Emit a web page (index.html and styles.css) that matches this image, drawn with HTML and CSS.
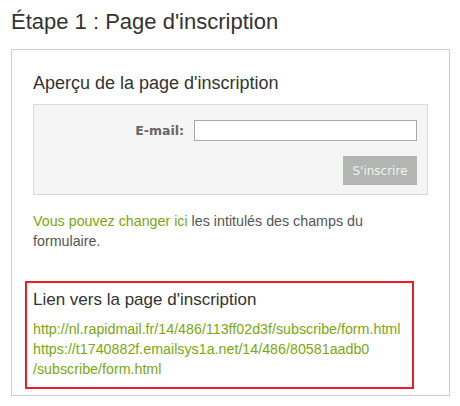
FILE: index.html
```html
<!DOCTYPE html>
<html lang="fr">
<head>
  <meta charset="UTF-8" />
  <title>Étape 1 : Page d'inscription</title>
  <link rel="stylesheet" href="styles.css">
</head>
<body>

  <h1 class="step-title">Étape 1 : Page d'inscription</h1>

  <div class="step-box">
    <h2 class="box-title">Aperçu de la page d'inscription</h2>

    <div class="preview">
      <div class="preview-row">
        <label for="email" class="preview-label">E-mail:</label>
        <input type="text" id="email" class="preview-input">
      </div>
      <div class="preview-actions">
        <button type="button" class="preview-btn">S'inscrire</button>
      </div>
    </div>

    <p class="hint"><a href="#">Vous pouvez changer ici</a> les intitulés des champs du formulaire.</p>

    <div class="link-block">
      <h3 class="link-title">Lien vers la page d'inscription</h3>
      <a href="#" class="form-link">http://nl.rapidmail.fr/14/486/113ff02d3f/subscribe/form.html</a><br>
      <a href="#" class="form-link">https://t1740882f.emailsys1a.net/14/486/80581aadb0<br>/subscribe/form.html</a>
    </div>
  </div>

</body>
</html>
```

FILE: styles.css
```css
* { margin: 0; padding: 0; box-sizing: border-box; }

body {
  background: #fff;
  font-family: "Liberation Sans", Arial, sans-serif;
  color: #555;
  padding: 9px 10px 0 11px;
}

a { color: #7ba70f; text-decoration: none; }

.step-title {
  font-size: 22px; font-weight: normal;
  color: #333;
  line-height: 26px;
  margin-bottom: 14px;
}

.step-box {
  width: 439px;
  border: 1px solid #cfcfcf;
  padding: 23px 21px 6px 21px;
}

.box-title {
  font-size: 18px; font-weight: normal;
  color: #333;
  line-height: 21px;
  margin-bottom: 10px;
}

.preview {
  background: #f6f5f5;
  border: 1px solid #dcdcdc;
  padding: 15px 10px 9px 10px;
}

.preview-row {
  display: flex; align-items: center; justify-content: flex-end;
  gap: 10px;
}

.preview-label {
  font-family: "DejaVu Sans", Verdana, sans-serif;
  font-size: 12.5px; font-weight: bold;
  color: #666;
}

.preview-input {
  width: 223px; height: 21px;
  border: 1px solid #a9a9a9;
  background: #fff;
  outline: none;
}

.preview-actions {
  display: flex; justify-content: flex-end;
  margin-top: 15px;
}

.preview-btn {
  width: 74px; height: 29px;
  border: none;
  background: #b3b5b2;
  color: #f2f2f2;
  font-family: "DejaVu Sans", Verdana, sans-serif;
  font-size: 12px;
}

.hint {
  font-size: 14.27px; line-height: 20px;
  margin-top: 16px;
}

.link-block {
  border: 2px solid #ee1c25;
  margin: 30px 14px 0 -8px;
  padding: 5px 6px 8px 6px;
  font-size: 14.27px; line-height: 20px;
}

.link-title {
  font-size: 17px; font-weight: normal;
  color: #333;
  line-height: 24px;
  margin-bottom: 7px;
}
```
